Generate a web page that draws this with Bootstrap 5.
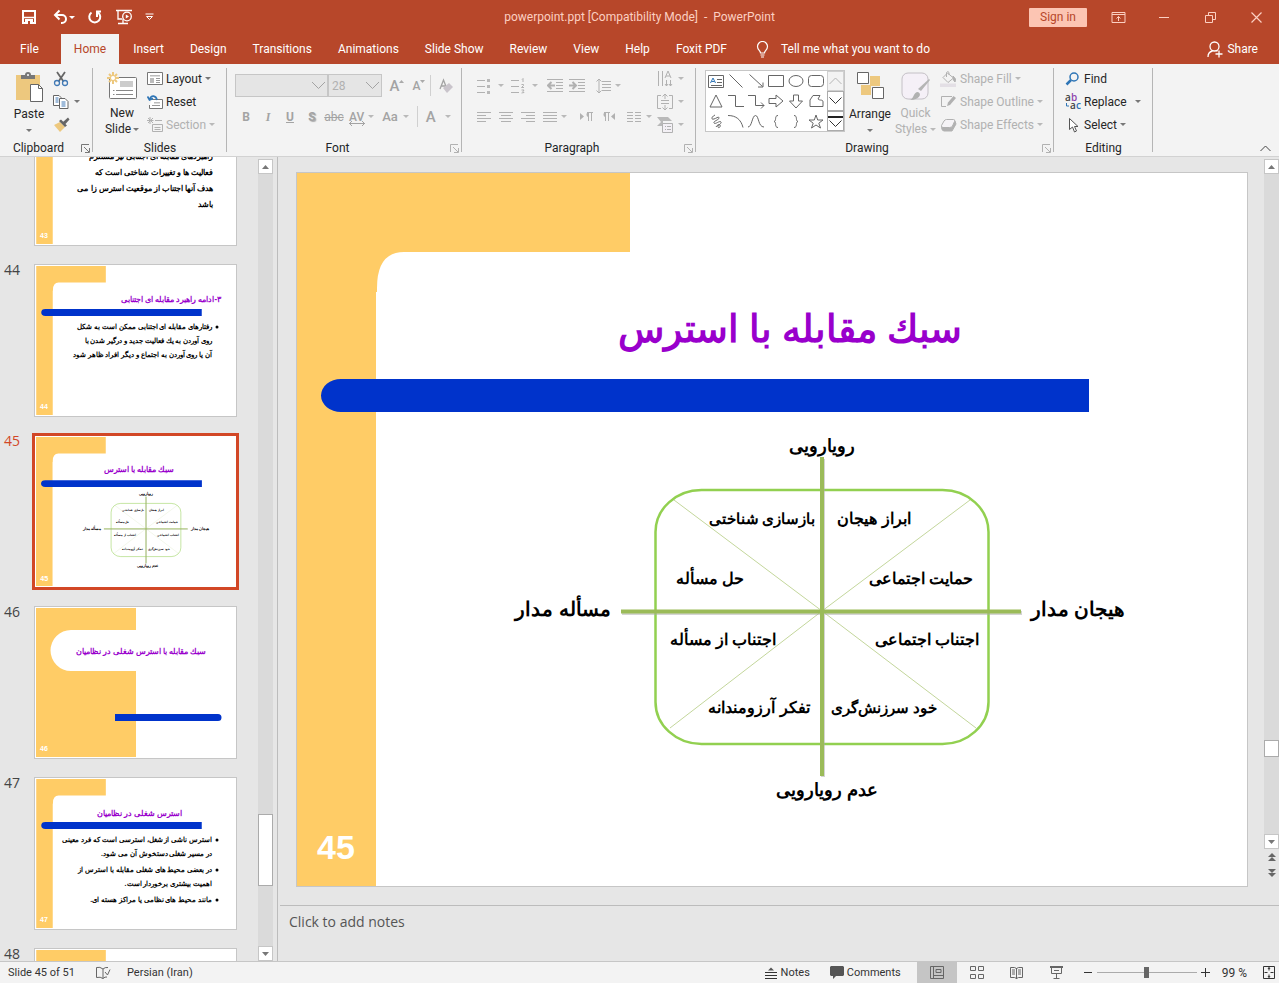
<!DOCTYPE html>
<html lang="en">
<head>
<meta charset="utf-8">
<meta name="viewport" content="width=device-width, initial-scale=1">
<title>powerpoint.ppt - PowerPoint</title>
<link href="https://cdn.jsdelivr.net/npm/bootstrap@5.3.0/dist/css/bootstrap.min.css" rel="stylesheet">
<style>
:root{--brand:#b7472a;--pane:#e6e6e6;--bar:#f3f3f3;--line:#c6c6c6;--ink:#262626;--off:#b1b1b1}
body{font:12px/16px Roboto,"Open Sans",sans-serif;color:var(--ink);background:var(--pane)}
button,input,select{font:inherit;color:inherit}
button{border:0;background:none;padding:0}
svg{display:block;flex:none;fill:none;stroke:currentColor}
svg text{stroke:none}
.brand{background:var(--brand);color:#fff}
.titlebar{height:34px;color:#fcd0c2}
.quick{color:#fff}
.quick button:first-child{margin-left:21px}
.winbtn{width:46px;height:32px;display:flex;align-items:center;justify-content:center}
.signin{width:58px;height:19px;background:#fcc5b3;color:var(--brand);border-radius:1px}
.tabs{height:30px}
.tabs a{color:#fff;text-decoration:none;padding:7px 13px}
.tabs a.active{background:var(--bar);color:var(--brand);margin:0 1px}
.ribbon{background:var(--bar);height:93px;border-bottom:1px solid #d2d2d2}
.grp{position:relative;display:flex;flex-direction:column;justify-content:space-between;flex:none}
.grp::after{content:"";position:absolute;right:0;top:4px;bottom:4px;border-right:1px solid #b5b5b5}
.grp-name{height:16px;text-align:center;padding-right:14px}
.launch{position:absolute;right:3px;bottom:3px;color:#777}
.rows{display:flex;flex-direction:column;padding-top:3px}
.rows>*{height:23px;display:flex;align-items:center}
.rows .btn-i,.tall{gap:3px}
.two{padding-top:6px}
.two>*{height:31px;display:flex;align-items:center}
.off{color:var(--off)}
.glyphs{color:#a3a3a3;font-weight:500}
.cell{width:22px;display:flex;justify-content:center;align-items:center}
.drop{display:flex;align-items:center;gap:5px}
.caret{width:0;height:0;flex:none;border:3px solid transparent;border-top-color:#777;border-bottom:0}
.off .caret,.off.caret{border-top-color:#b9b9b9}
.tall{display:flex;flex-direction:column;align-items:center}
.combo{position:relative;height:23px;flex:none;font-weight:400}
.combo select{appearance:none;width:100%;height:100%;background:#e5e5e5;border:1px solid #c6c6c6;border-radius:0;padding:0 3px;color:var(--off);opacity:1}
.combo svg{position:absolute;right:2px;top:7px}
.vsep{width:1px;height:21px;background:#d0d0d0}
.gallery{height:62px;border:1px solid #c6c6c6;background:#fff;margin:6px 0 0 9px}
.gal-grid{display:grid;grid-template-columns:repeat(6,20px);grid-auto-rows:20px;color:#666;padding-right:1px}
.gal-grid button{display:flex;align-items:center;justify-content:center}
.gal-nav{width:17px;display:flex;flex-direction:column;background:#fff}
.gal-nav button{flex:1;border:1px solid #ababab;display:flex;align-items:center;justify-content:center}
.gal-nav button:first-child{background:var(--bar);border-color:#d0d0d0;color:#b5b5b5}
.work{min-height:0}
.thumbs{width:258px;overflow:hidden}
.thumbs ol{list-style:none;margin:-64px 0 0;padding:0 21px 0 4px}
.thumbs li{display:flex;margin-bottom:18px}
.num{width:30px;flex:none;font:14px/12px "Open Sans",sans-serif;color:#444}
.thumb{display:block;flex:1;height:153px;border:1px solid var(--line);background:#fff;padding:1px;overflow:hidden}
.thumb svg{width:100%;height:auto}
.thumbs li.on .num{color:#d24726}
.thumbs li.on .thumb{border-color:#d24726;outline:2px solid #d24726}
.fa{font-family:"Noto Sans",serif;direction:rtl}
.scroll{width:15px;display:flex;flex-direction:column;padding-top:2px;flex:none}
.scroll button{height:15px;background:#fff;border:1px solid var(--line);display:flex;align-items:center;justify-content:center;flex:none}
.scroll .bare{background:none;border:0;height:16px}
.track{background:#dadada}
.grip{background:#fff;border:1px solid #ababab;flex:none}
.split{width:5px;border-right:1px solid #bcbcbc}
.stage{padding:15px 16px 18px 18px;min-width:0}
.slide{border:1px solid var(--line);background:#fff}
.slide svg{width:100%;height:auto}
.notes{border-top:1px solid #bcbcbc;margin-left:2px;flex:1}
.notes textarea{font:14px/18px "Open Sans",sans-serif;border:0;background:none;resize:none;width:100%;height:40px;padding:7px 9px;color:#555;display:block}
.notes textarea::placeholder{color:#555;opacity:1}
.status{height:22px;border-top:1px solid var(--line);background:var(--bar);color:#333;font-size:11px;line-height:20px}
.view{width:40px;height:21px;display:flex;align-items:center;justify-content:center;color:#666}
.view.on{background:#c5c5c5}
.zoom{appearance:none;width:100px;height:14px;background:linear-gradient(#ababab,#ababab) center/100% 1px no-repeat}
.zoom::-webkit-slider-thumb{appearance:none;width:5px;height:11px;background:#666}
</style>
</head>
<body class="vh-100 d-flex flex-column overflow-hidden">

<header class="brand flex-shrink-0">
  <div class="titlebar d-flex align-items-center">
    <div class="quick d-flex align-items-center col">
      <button aria-label="Save"><svg width="16" height="16" viewBox="0 0 16 16" stroke-width="2"><path d="M2 2h12v12H2z"/><path d="M2 8.500h12" stroke-width="1.500"/><path d="M4 10h8v4H4z" fill="currentColor" stroke="none"/><path d="M7 12h2v3H7z" fill="#b7472a" stroke="none"/></svg></button>
      <button class="ms-3" aria-label="Undo"><svg width="16" height="16" viewBox="0 0 16 16" stroke-width="2"><path d="M2.500 6H9a4 4 0 0 1 0 8H8M6.500 1.500 2 6l4.500 4.500"/></svg></button>
      <span class="caret" style="border-top-color:#fff"></span>
      <button class="ms-2 ps-1" aria-label="Repeat"><svg width="16" height="16" viewBox="0 0 16 16" stroke-width="2"><path d="M4.500 3.500a5.500 5.500 0 1 0 6.500 0M10 8V2.500h4"/></svg></button>
      <button class="ms-2 ps-1" aria-label="Start slide show"><svg width="18" height="16" viewBox="0 0 18 16" stroke-width="1.300"><path d="M1 1.500h16M3 1.500V10h4M3 14.500h10M8 10v4"/><circle cx="12" cy="7.500" r="4.300"/><path d="m10.800 5.500 3.200 2-3.200 2z" fill="currentColor" stroke="none"/></svg></button>
      <button class="ms-2 ps-1" aria-label="Customize toolbar"><svg width="9" height="8" viewBox="0 0 9 8"><path d="M.5 1h8M1.500 3.500l3 3 3-3z"/></svg></button>
    </div>
    <div style="white-space:pre">powerpoint.ppt [Compatibility Mode]  -  PowerPoint</div>
    <div class="d-flex align-items-center justify-content-end col">
      <button class="signin me-2">Sign in</button>
      <button class="winbtn" aria-label="Ribbon options"><svg width="15" height="11" viewBox="0 0 15 11"><path d="M1 .5h13v10H1zM1 2.500h13M7.500 9V4.500M5.500 6.500l2-2 2 2"/></svg></button>
      <button class="winbtn" aria-label="Minimize"><svg width="11" height="11" viewBox="0 0 11 11"><path d="M0 5.500h10"/></svg></button>
      <button class="winbtn" aria-label="Restore"><svg width="13" height="11" viewBox="0 0 13 11"><path d="M1.500 3.500h7v7h-7zM4.500 3V.5h7v7H9"/></svg></button>
      <button class="winbtn" aria-label="Close"><svg width="11" height="11" viewBox="0 0 11 11"><path d="m.5.5 10 10M10.500.5l-10 10" stroke-width="1.200"/></svg></button>
    </div>
  </div>
  <nav class="tabs d-flex">
    <a href="#" class="ms-1 ps-3 me-2">File</a><a href="#" class="active">Home</a><a href="#">Insert</a><a href="#">Design</a><a href="#">Transitions</a><a href="#">Animations</a><a href="#">Slide Show</a><a href="#">Review</a><a href="#">View</a><a href="#">Help</a><a href="#">Foxit PDF</a>
    <a href="#" class="d-flex gap-2 ps-3"><svg class="me-1" width="13" height="17" viewBox="0 0 13 17" stroke-width="1.200"><path d="M4.500 12c0-2.500-3-3-3-6.500a5 5 0 0 1 10 0c0 3.500-3 4-3 6.500zM4.500 14h4M5 16h3"/></svg>Tell me what you want to do</a>
    <a href="#" class="ms-auto d-flex gap-1 me-2"><svg width="16" height="17" viewBox="0 0 16 17" stroke-width="1.300"><circle cx="7.500" cy="5.500" r="4.500"/><path d="M1 16c0-3 2-5.500 4.500-6M9.500 9.500l1 .8M8.500 13h7M12 9.500v7"/></svg>Share</a>
  </nav>
</header>

<section class="ribbon d-flex flex-shrink-0" aria-label="Home">
  <div class="grp" style="width:93px">
    <div class="d-flex">
      <button class="tall pt-1" style="width:58px"><svg class="mt-1" width="30" height="31" viewBox="0 0 30 31"><path d="M2 3h24v25H2z" fill="#edc87e" stroke="none"/><path d="M7 6V3h4a3 3 0 0 1 6 0h4v4H7z" fill="#777" stroke="none"/><circle cx="14" cy="3" r="1" fill="#fff" stroke="none"/><path d="M16.500 12.500h8l4 4v13h-12z" fill="#fff" stroke="#666"/><path d="M24.500 12.500v4h4" stroke="#666"/></svg><span>Paste</span><span class="caret mt-1"></span></button>
      <div class="rows" style="margin-left:-5px">
        <button aria-label="Cut"><svg width="16" height="16" viewBox="0 0 16 16"><path d="m4 1 6.500 9.500M12 1 5.500 10.500" stroke="#666" stroke-width="1.800"/><circle cx="4" cy="12" r="2.500" stroke="#4179b5" stroke-width="1.300"/><circle cx="12" cy="12" r="2.500" stroke="#4179b5" stroke-width="1.300"/></svg></button>
        <button class="drop" aria-label="Copy"><svg width="16" height="16" viewBox="0 0 16 16"><path d="M.5 1.500H6l2 2v8H.5z" fill="#fff" stroke="#666"/><path d="M6.500 4.500H12l3 3v7H6.500z" fill="#fff" stroke="#666"/><path d="M2.500 4h3M2.500 6h3M2.500 8h3M8.500 8h4M8.500 10h4M8.500 12h4" stroke="#4179b5"/></svg><span class="caret"></span></button>
        <button aria-label="Format Painter"><svg width="17" height="16" viewBox="0 0 17 16"><path d="m1 8 6-3 5 5-5 5z" fill="#edc87e" stroke="none"/><path d="m6 4 2-1.500 6 6-2 1.500zM10 5l5-4.500 1.500 2-4.500 5z" fill="#666" stroke="none"/></svg></button>
      </div>
    </div>
    <div class="grp-name pe-3">Clipboard</div>
    <button class="launch" aria-label="Clipboard options"><svg width="9" height="9" viewBox="0 0 9 9"><path d="M.5 8V.5H8M3 3l5 5M8.500 4v4.500H4"/></svg></button>
  </div>

  <div class="grp" style="width:134px">
    <div class="d-flex ps-2">
      <button class="tall pt-1" style="width:42px;gap:0"><svg class="mb-1 mt-1" width="32" height="29" viewBox="0 0 32 29"><rect x="3.500" y="5.500" width="27" height="21" rx="1" fill="#fff" stroke="#777"/><path d="M14 9h13v6H14z" fill="#ccc" stroke="none"/><path d="M7 18.500h1.500M10 18.500h17M7 22.500h1.500M10 22.500h17" stroke="#888"/><path d="M7 0v12M1 6h12M3 2l8 8M11 2l-8 8" stroke="#edc87e" stroke-width="2"/><circle cx="7" cy="6" r="2" fill="#fff" stroke="none"/></svg><span>New</span><span class="drop" style="gap:2px">Slide <span class="caret"></span></span></button>
      <div class="rows ps-1">
        <button class="btn-i"><svg width="16" height="15" viewBox="0 0 16 15"><path d="M.5 1.500h15v12H.5z" fill="#fff" stroke="#777"/><path d="M3 4h10v1.500H3zM3 7h4v5H3z" fill="#bbb" stroke="none"/><path d="M9 7.500h4M9 9.500h4M9 11.500h4" stroke="#999"/></svg>Layout<span class="caret"></span></button>
        <button class="btn-i"><svg width="16" height="16" viewBox="0 0 16 16"><path d="M5 5.500h10.500v9h-13V11" fill="#fff" stroke="#777"/><path d="M7 8h6v1.500H7z" fill="#bbb" stroke="none"/><path d="M5 11.500h8" stroke="#999"/><path d="M10 6C9 1 4 1 3 5M.5 2.500 2.500 6 6 4.500" stroke="#2e75b6" stroke-width="1.700"/></svg>Reset</button>
        <button class="btn-i off"><svg width="16" height="16" viewBox="0 0 16 16"><path d="M3 0v7M0 3.500h6.500M1 1l5 5M6 1 1 6M8 3.500h7M5.500 7.500h10v7h-10zM7.500 10.500h6M7.500 12.500h6"/></svg>Section<span class="caret"></span></button>
      </div>
    </div>
    <div class="grp-name pe-0">Slides</div>
  </div>

  <div class="grp off" style="width:235px">
    <div class="two ps-2 glyphs">
      <div>
        <label class="combo" style="width:93px"><select disabled aria-label="Font name"><option></option></select><svg width="15" height="9" viewBox="0 0 15 9"><path d="m1 1 6.500 6.500L14 1"/></svg></label>
        <label class="combo" style="width:54px"><select disabled aria-label="Font size"><option>28</option></select><svg width="15" height="9" viewBox="0 0 15 9"><path d="m1 1 6.500 6.500L14 1"/></svg></label>
        <button class="cell ms-1" style="font-size:15px" aria-label="Increase font size">A<svg class="mb-2" width="5" height="4"><path d="m0 3 2.500-3L5 3z" fill="#aaa" stroke="none"/></svg></button>
        <button class="cell" aria-label="Decrease font size">A<svg class="mb-2" width="5" height="4"><path d="m0 0 2.500 3L5 0z" fill="#aaa" stroke="none"/></svg></button>
        <span class="vsep"></span>
        <button class="cell ms-1" aria-label="Clear formatting"><svg width="16" height="16" viewBox="0 0 16 16"><path d="M2 11 5.500 2 9 11M3 8h5" stroke-width="1.300"/><path d="m5 10 6-5 4 4-6 6z" fill="#c9c4cb" stroke="none"/></svg></button>
      </div>
      <div>
        <button class="cell fw-bold">B</button><button class="cell fst-italic fw-bold" style="font-family:'Liberation Serif',serif">I</button><button class="cell fw-bold text-decoration-underline">U</button><button class="cell fw-bold" style="text-shadow:1px 1px 1px #aaa">S</button><button class="cell fw-normal text-decoration-line-through">abc</button>
        <button class="drop ms-1" style="gap:4px"><span class="position-relative">AV<svg class="position-absolute start-0" style="top:12px" width="16" height="5" viewBox="0 0 16 5"><path d="M0 2.500h16M3 0 .5 2.500 3 5M13 0l2.500 2.500L13 5"/></svg></span><span class="caret"></span></button>
        <button class="drop ms-2" style="font-size:13px">Aa<span class="caret"></span></button>
        <span class="vsep ms-2"></span>
        <button class="drop ms-2" style="gap:9px;font-size:15px">A<span class="caret"></span></button>
      </div>
    </div>
    <div class="grp-name text-body">Font</div>
    <button class="launch off" aria-label="Font options"><svg width="9" height="9" viewBox="0 0 9 9"><path d="M.5 8V.5H8M3 3l5 5M8.500 4v4.500H4"/></svg></button>
  </div>

  <div class="grp off" style="width:234px">
    <div class="d-flex">
      <div class="two" style="width:195px">
        <div style="padding-left:14px">
          <button class="drop" style="width:34px;gap:6px" aria-label="Bullets"><svg width="16" height="16" viewBox="0 0 16 16"><path d="M1 2.500h8M1 8.500h8M1 14.500h8"/><path d="M11 1h3v3h-3zM11 7h3v3h-3zM11 13h3v3h-3z" fill="#b9b9b9" stroke="none"/></svg><span class="caret"></span></button>
          <button class="drop" style="width:34px;gap:6px" aria-label="Numbering"><svg width="16" height="16" viewBox="0 0 16 16"><path d="M1 2.500h8M1 8.500h8M1 14.500h8M12 1.500l1-1V4M11.500 6.500h2v1l-2 2h2.500M11.500 12h2.500l-1 1.500 1 1-2.500.5"/></svg><span class="caret"></span></button>
          <button class="cell" aria-label="Decrease indent"><svg width="17" height="14" viewBox="0 0 17 14"><path d="M0 .5h16M9 3.500h7M9 6.500h7M9 9.500h7M0 12.500h16"/><path d="M1 6.500h7M4.500 3 1 6.500 4.500 10" stroke-width="2"/></svg></button>
          <button class="cell" aria-label="Increase indent"><svg width="17" height="14" viewBox="0 0 17 14"><path d="M0 .5h16M9 3.500h7M9 6.500h7M9 9.500h7M0 12.500h16"/><path d="M0 6.500h7M3.500 3 7 6.500 3.500 10" stroke-width="2"/></svg></button>
          <button class="drop ms-2" style="gap:4px" aria-label="Line spacing"><svg width="15" height="16" viewBox="0 0 15 16"><path d="M6 3.500h9M6 6.500h9M6 9.500h9M6 12.500h9M3 1v14M.5 3.500 3 1l2.500 2.500M.5 12.500 3 15l2.500-2.500"/></svg><span class="caret"></span></button>
        </div>
        <div style="padding-left:11px">
          <button class="cell" aria-label="Align left"><svg width="14" height="10"><path d="M0 .5h14M0 3.500h9M0 6.500h14M0 9.500h9"/></svg></button>
          <button class="cell" aria-label="Center"><svg width="14" height="10"><path d="M0 .5h14M2 3.500h10M0 6.500h14M2 9.500h10"/></svg></button>
          <button class="cell" aria-label="Align right"><svg width="14" height="10"><path d="M0 .5h14M5 3.500h9M0 6.500h14M5 9.500h9"/></svg></button>
          <button class="drop ms-1 pe-2" style="gap:4px" aria-label="Justify"><svg width="14" height="10"><path d="M0 .5h14M0 3.500h14M0 6.500h14M0 9.500h14"/></svg><span class="caret"></span></button>
          <button class="cell" aria-label="Left to right"><svg width="13" height="9" viewBox="0 0 13 9"><path d="m0 1 4 3.500L0 8z" fill="#b1b1b1" stroke="none"/><path d="M7 .5h6M8.500 0v9M11.500 0v9"/><path d="M9 0a2.500 2.500 0 0 0 0 5z" fill="#b1b1b1" stroke="none"/></svg></button>
          <button class="cell" aria-label="Right to left"><svg width="13" height="9" viewBox="0 0 13 9"><path d="M13 1 9 4.500 13 8z" fill="#b1b1b1" stroke="none"/><path d="M2 .5h6M3.500 0v9M6.500 0v9"/><path d="M4 0a2.500 2.500 0 0 0 0 5z" fill="#b1b1b1" stroke="none"/></svg></button>
          <button class="drop ms-2" aria-label="Columns"><svg width="14" height="10"><path d="M0 .5h6M0 3.500h6M0 6.500h6M0 9.500h6M8 .5h6M8 3.500h6M8 6.500h6M8 9.500h6"/></svg><span class="caret"></span></button>
        </div>
      </div>
      <div class="rows">
        <button class="drop" aria-label="Text direction"><svg width="16" height="16" viewBox="0 0 16 16"><path d="M1.500 0v15M5.500 0v15M9.500 9v6M13.500 9v6M8 7l3-7 3 7M9 5h4M12 13l1.500 2 1.500-2M8 13l1.500 2 1.500-2"/></svg><span class="caret"></span></button>
        <button class="drop" aria-label="Align text"><svg width="16" height="16" viewBox="0 0 16 16"><path d="M4 1.500H.5v13H4M12 1.500h3.500v13H12M8 0v5M5.500 2.500 8 0l2.500 2.500M8 16v-5M5.500 13.500 8 16l2.500-2.500M4 6.500h8M4 9.500h8"/></svg><span class="caret"></span></button>
        <button class="drop" aria-label="Convert to SmartArt"><svg width="16" height="16" viewBox="0 0 16 16"><path d="M0 0h11l4 4H6v5H0l4-4z" fill="#b9b9b9" stroke="none"/><path d="M5.500 6.500h10v9h-10z" fill="#f3f0f5"/><path d="M8 9.500h1M10 9.500h4M8 12.500h1M10 12.500h4"/></svg><span class="caret"></span></button>
      </div>
    </div>
    <div class="grp-name text-body">Paragraph</div>
    <button class="launch off" aria-label="Paragraph options"><svg width="9" height="9" viewBox="0 0 9 9"><path d="M.5 8V.5H8M3 3l5 5M8.500 4v4.500H4"/></svg></button>
  </div>

  <div class="grp" style="width:358px">
    <div class="d-flex">
      <div class="gallery d-flex">
        <div class="gal-grid">
          <button aria-label="Text box"><svg width="16" height="13" viewBox="0 0 16 13"><path d="M.5.5h15v12H.5zM9 4.500h5M9 7.500h5M3 10.500h11"/><path d="M2.500 8 5 3l2.500 5M3.500 6.500h3" stroke="#2e75b6"/></svg></button>
          <button aria-label="Line"><svg width="14" height="14"><path d="m.5.5 13 13"/></svg></button>
          <button aria-label="Arrow line"><svg width="15" height="14"><path d="m.5.5 13 12M14 8.500v4.500H9"/></svg></button>
          <button aria-label="Rectangle"><svg width="16" height="12"><path d="M.5.5h15v11H.5z"/></svg></button>
          <button aria-label="Oval"><svg width="16" height="12"><ellipse cx="8" cy="6" rx="7" ry="5.500"/></svg></button>
          <button aria-label="Rounded rectangle"><svg width="16" height="12"><rect x=".5" y=".5" width="15" height="11" rx="3"/></svg></button>
          <button aria-label="Triangle"><svg width="14" height="14"><path d="m7 1 6 12H1z"/></svg></button>
          <button aria-label="Elbow"><svg width="16" height="14"><path d="M0 1.500h7.500v11H16"/></svg></button>
          <button aria-label="Elbow arrow"><svg width="17" height="15"><path d="M0 1.500h7.500v10H16M13 8.500l3 3-3 3"/></svg></button>
          <button aria-label="Right arrow"><svg width="16" height="14"><path d="M1 4.500h7V1l7 6-7 6V9.500H1z"/></svg></button>
          <button aria-label="Down arrow"><svg width="16" height="15"><path d="M5.500 1v6H1.500L8 14l6.500-7h-4V1z"/></svg></button>
          <button aria-label="Freeform"><svg width="15" height="14"><path d="M4 1.500h7L9 5c2 2 5 0 5 3v4.500H1V6z"/></svg></button>
          <button aria-label="Scribble"><svg width="13" height="15"><path d="M5 1C1 3 1 6 4 5s5-3 5-1-6 3-5 5 6-3 7-1-4 3-3 5 3-1 2-2-3 0-4 2"/></svg></button>
          <button aria-label="Arc"><svg width="16" height="14"><path d="M0 1.500c8 0 13 4 15 12"/></svg></button>
          <button aria-label="Curve"><svg width="17" height="14"><path d="M0 13C4 13 4 1.500 7.500 1.500S10 13 16 13"/></svg></button>
          <button aria-label="Left brace"><svg width="6" height="13"><path d="M5 .5C1 .5 4 6 1 6.500 4 7 1 12.500 5 12.500"/></svg></button>
          <button aria-label="Right brace"><svg width="6" height="13"><path d="M1 .5c4 0 1 5.500 4 6-3 .5 0 6-4 6"/></svg></button>
          <button aria-label="Star"><svg width="16" height="15"><path d="m8 1 1.700 5H15l-4.200 3.200L12.500 14 8 11l-4.500 3 1.700-4.800L1 6h5.300z"/></svg></button>
        </div>
        <div class="gal-nav">
          <button aria-label="Scroll up"><svg width="13" height="8"><path d="m.5 7 6-6 6 6"/></svg></button>
          <button aria-label="Scroll down"><svg width="13" height="8"><path d="m.5.500 6 6 6-6" stroke="#333"/></svg></button>
          <button aria-label="More shapes"><svg width="15" height="13"><path d="M0 2h15" stroke="#222" stroke-width="2"/><path d="m1.500 5.500 6 6 6-6" stroke="#333"/></svg></button>
        </div>
      </div>
      <button class="tall pt-1" style="width:50px"><svg class="mt-1" width="28" height="31" viewBox="0 0 28 31"><path d="M14 4h10v10H14zM5 13h10v10H5z" fill="#edc87e" stroke="none"/><path d="M1.500.500h11v11h-11zM16.500 15.500h11v11h-11z" fill="#fff" stroke="#666"/></svg><span>Arrange</span><span class="caret mt-1"></span></button>
      <button class="tall pt-1 off" style="width:41px;gap:0"><svg class="mb-1 mt-1" width="30" height="29" viewBox="0 0 30 29"><rect x="1" y="1" width="26" height="26" rx="6" fill="#f5f0f7" stroke="#c4c0c6"/><path d="m29 8-9 11-3-2L28 7z" fill="#b5b5b5" stroke="none"/><path d="M8 28c5 0 4-8 9-8 5 2 0 9-9 8z" fill="#b1b1b1" stroke="none"/></svg><span>Quick</span><span class="drop" style="gap:3px">Styles <span class="caret"></span></span></button>
      <div class="rows off ps-1">
        <button class="btn-i"><svg width="17" height="16" viewBox="0 0 17 16"><path d="m7.500 2 6 5-5.500 4.500-5-5zM6.500 6V1.500q1.500-2 2.500 0V4"/><path d="M13 5q4 3 2 6-2-1-2-6z" fill="#b1b1b1"/><path d="M0 12.500h16V16H0z" fill="#e3dfe5" stroke="none"/></svg>Shape Fill<span class="caret"></span></button>
        <button class="btn-i"><svg width="17" height="16" viewBox="0 0 17 16"><path d="M12 2.500H1.500v10H6"/><path d="m7 12 1-3.500L13.500 2 16 4l-6 7z" fill="#b1b1b1" stroke="none"/></svg>Shape Outline<span class="caret"></span></button>
        <button class="btn-i"><svg width="17" height="16" viewBox="0 0 17 16"><path d="m15 4 1 3-4 7H4q-2 0-2.500-3.500H11z" fill="#b1b1b1"/><path d="M6.500 2.500h7q2 0 1 2l-2 4.500q-1 1.500-3 1.500H3q-2 0-1.500-2L4 4q1-1.500 2.500-1.500z" fill="#f5f3f6"/></svg>Shape Effects<span class="caret"></span></button>
      </div>
    </div>
    <div class="grp-name pe-3">Drawing</div>
    <button class="launch off" aria-label="Drawing options"><svg width="9" height="9" viewBox="0 0 9 9"><path d="M.5 8V.5H8M3 3l5 5M8.500 4v4.500H4"/></svg></button>
  </div>

  <div class="grp" style="width:99px">
    <div class="rows" style="padding-left:11px">
      <button class="btn-i"><svg width="16" height="14" viewBox="0 0 16 14"><circle cx="9" cy="5" r="4" stroke="#2e75b6" stroke-width="1.500"/><path d="m6 8-4.500 4.500" stroke="#2e75b6" stroke-width="2.500"/></svg>Find</button>
      <div><button class="btn-i d-flex align-items-center"><svg width="16" height="18" viewBox="0 0 16 18" font-family="Open Sans" font-size="10" font-weight="600"><text x="0" y="8" fill="#444">a</text><text x="6" y="8" fill="#8e44ad">b</text><text x="5" y="16" fill="#444">a</text><text x="11" y="16" fill="#2e75b6">c</text><path d="M1.500 10v3H4" stroke="#2e75b6"/></svg>Replace</button><button class="caret ms-2" aria-label="Replace options"></button></div>
      <button class="btn-i"><svg width="16" height="16" viewBox="0 0 16 16"><path d="M4.500 1.500v11l3-2.500 2 5 2-1-2-4.500h3.500z" fill="#fff" stroke="#555"/></svg>Select<span class="caret"></span></button>
    </div>
    <div class="grp-name pe-0">Editing</div>
  </div>
  <button class="ms-auto align-self-end me-2 mb-1" aria-label="Collapse the ribbon"><svg width="11" height="7"><path d="m.5 6 5-5 5 5" stroke="#444"/></svg></button>
</section>

<main class="work d-flex flex-fill">
  <aside class="thumbs flex-shrink-0">
    <ol>
      <li><span class="num"></span><a href="#" class="thumb" aria-label="Slide 43"><svg viewBox="0 0 199 149"><use href="#look" width="199" height="149"/><g class="fa" font-size="8" font-weight="bold" fill="#000"><text x="177" y="64">راهبردهای مقابله ای اجتنابی نیز مستلزم</text><text x="177" y="80">فعالیت ها و تغییرات شناختی است كه</text><text x="177" y="96">هدف آنها اجتناب از موقعیت استرس زا می</text><text x="177" y="112">باشد</text></g><text x="4" y="143" font-family="Liberation Sans" font-weight="bold" font-size="7" fill="#fff">43</text></svg></a></li>
      <li><span class="num">44</span><a href="#" class="thumb"><svg viewBox="0 0 199 149"><use href="#look" width="199" height="149"/><text class="fa" x="185" y="36" font-size="8" fill="#90c" font-weight="bold">۳-ادامه راهبرد مقابله ای اجتنابی</text><g class="fa" font-size="7" font-weight="bold" fill="#000"><text x="176" y="63">رفتارهای مقابله ای اجتنابی ممكن است به شكل</text><text x="176" y="77">روی آوردن به یك فعالیت جدید و درگیر شدن با</text><text x="176" y="91">آن یا روی آوردن به اجتماع و دیگر افراد ظاهر شود</text></g><circle cx="181" cy="61" r="1.500" fill="#000" stroke="none"/><text x="4" y="143" font-family="Liberation Sans" font-weight="bold" font-size="7" fill="#fff">44</text></svg></a></li>
      <li class="on"><span class="num">45</span><a href="#" class="thumb" id="current" aria-label="Slide 45"></a></li>
      <li><span class="num">46</span><a href="#" class="thumb"><svg viewBox="0 0 199 149"><path d="M0 0h100v22H35a20 20 0 0 0 0 41h65v86H0z" fill="#fc6" stroke="none"/><path d="M79 106h103a3.500 3.500 0 0 1 0 7H79z" fill="#0033cb" stroke="none"/><text class="fa" x="105" y="46" text-anchor="middle" font-size="8" font-weight="bold" fill="#90c">سبك مقابله با استرس شغلی در نظامیان</text><text x="4" y="143" font-family="Liberation Sans" font-weight="bold" font-size="7" fill="#fff">46</text></svg></a></li>
      <li><span class="num">47</span><a href="#" class="thumb"><svg viewBox="0 0 199 149"><use href="#look" width="199" height="149"/><text class="fa" x="146" y="37" font-size="8" font-weight="bold" fill="#90c">استرس شغلی در نظامیان</text><g class="fa" font-size="7" font-weight="bold" fill="#000"><text x="176" y="63">استرس ناشی از شغل، استرسی است كه فرد معینی</text><text x="176" y="77">در مسیر شغلی دستخوش آن می شود.</text><text x="176" y="93">در بعضی محیط های شغلی مقابله با استرس از</text><text x="176" y="107">اهمیت بیشتری برخوردار است.</text><text x="176" y="123">مانند محیط های نظامی یا مراكز هسته ای.</text></g><g fill="#000" stroke="none"><circle cx="181" cy="61" r="1.500"/><circle cx="181" cy="91" r="1.500"/><circle cx="181" cy="121" r="1.500"/></g><text x="4" y="143" font-family="Liberation Sans" font-weight="bold" font-size="7" fill="#fff">47</text></svg></a></li>
      <li><span class="num">48</span><a href="#" class="thumb" aria-label="Slide 48"><svg viewBox="0 0 199 149"><use href="#look" width="199" height="149"/></svg></a></li>
    </ol>
  </aside>
  <div class="scroll">
    <button aria-label="Scroll up"><svg width="7" height="4"><path d="M0 4 3.500 0 7 4z" fill="#777" stroke="none"/></svg></button>
    <div class="track" style="flex:641"></div><div class="grip" style="height:72px"></div><div class="track" style="flex:60"></div>
    <button aria-label="Scroll down"><svg width="7" height="4"><path d="m0 0 3.500 4L7 0z" fill="#777" stroke="none"/></svg></button>
  </div>
  <div class="split"></div>
  <div class="d-flex flex-column flex-fill" style="min-width:0">
    <div class="d-flex">
      <div class="stage flex-fill">
        <div class="slide">
          <svg id="slide" viewBox="0 0 950 713">
            <defs><symbol id="look" viewBox="0 0 950 713"><path d="M0 0h333v79H107q-27 0-27 36v4h-1v594H0z" fill="#fc6" stroke="none"/><path d="M792 206v33H44a20 16.500 0 0 1 0-33z" fill="#0033cb" stroke="none"/></symbol></defs>
            <use href="#look" width="950" height="713"/>
            <text class="fa" x="493" y="169" text-anchor="middle" font-size="38" font-weight="bold" fill="#90c">سبك مقابله با استرس</text>
            <g stroke="#c3d69b"><path d="M377 327 525 438 373 555M673 327 525 438 679 555"/></g>
            <rect x="358.500" y="317" width="333" height="254" rx="46" ry="42" stroke="#92d050" stroke-width="2.500"/>
            <path d="M526 286v318M325 440h400" stroke="#aaa" stroke-width="4" opacity=".5"/>
            <path d="M525 284v319M324 438.500h400" stroke="#9bbb59" stroke-width="4"/>
            <g class="fa" font-weight="bold" fill="#000" text-anchor="middle">
              <g font-size="18"><text x="525" y="279">رویارویی</text><text x="530" y="623">عدم رویارویی</text></g>
              <g font-size="20"><text x="781" y="443">هیجان مدار</text><text x="266" y="443">مسأله مدار</text></g>
              <g font-size="16"><text x="465" y="351" font-size="15">بازسازی شناختی</text><text x="577" y="351">ابراز هیجان</text><text x="413" y="411">حل مسأله</text><text x="624" y="411">حمایت اجتماعی</text><text x="426" y="472">اجتناب از مسأله</text><text x="630" y="472">اجتناب اجتماعی</text><text x="462" y="540">تفكر آرزومندانه</text><text x="587" y="540" font-size="15">خود سرزنش‌گری</text></g>
            </g>
            <text x="20" y="686" font-family="Liberation Sans" font-weight="bold" font-size="34" fill="#fff">45</text>
          </svg>
        </div>
      </div>
      <div class="scroll">
        <button aria-label="Scroll up"><svg width="7" height="4"><path d="M0 4 3.500 0 7 4z" fill="#777" stroke="none"/></svg></button>
        <div class="track" style="flex:566"></div><div class="grip" style="height:17px"></div><div class="track" style="flex:77"></div>
        <button aria-label="Scroll down"><svg width="7" height="4"><path d="m0 0 3.500 4L7 0z" fill="#777" stroke="none"/></svg></button>
        <button class="bare" aria-label="Previous slide"><svg width="8" height="8"><path d="m0 4 4-4 4 4zM0 8l4-4 4 4z" fill="#666" stroke="none"/></svg></button>
        <button class="bare mb-4" aria-label="Next slide"><svg width="8" height="8"><path d="m0 0 4 4 4-4zM0 4l4 4 4-4z" fill="#666" stroke="none"/></svg></button>
      </div>
    </div>
    <div class="notes"><textarea placeholder="Click to add notes" aria-label="Notes"></textarea></div>
  </div>
</main>

<footer class="status d-flex align-items-center flex-shrink-0">
  <span class="ms-2" style="width:88px">Slide 45 of 51</span>
  <button aria-label="Spelling"><svg width="15" height="14" viewBox="0 0 15 14"><path d="M7 3v9.500M7 3Q4 .5.500 1.500v10q4-1 6.500 1 2-2 4-1.500M7 3q2-2 5-1.500M9 6l2.500 3L14 3.500" stroke="#666"/></svg></button>
  <button class="ms-3">Persian (Iran)</button>
  <button class="ms-auto d-flex align-items-center gap-1"><svg width="12" height="12" viewBox="0 0 12 12"><path d="M0 5.500h12M0 8.500h12M0 11.500h12"/><path d="m3 3.500 3-3 3 3z" fill="#555" stroke="none"/></svg>Notes</button>
  <button class="d-flex align-items-center ms-3 ps-1 me-3" style="gap:3px"><svg width="14" height="13" viewBox="0 0 14 13"><path d="M1 0h12l1 1v8l-1 1H6l-3 3v-3H1L0 9V1z" fill="#555" stroke="none"/></svg>Comments</button>
  <button class="view on" aria-label="Normal"><svg width="14" height="14"><path d="M.5.500h13v12H.5zM3.500.5v12M3.500 9.500h10M6 3.500h5v3H6z"/></svg></button>
  <button class="view" aria-label="Slide sorter"><svg width="14" height="13"><path d="M.5.500h5v4h-5zM8.500.5h5v4h-5zM.5 8.500h5v4h-5zM8.500 8.500h5v4h-5z"/></svg></button>
  <button class="view" aria-label="Reading view"><svg width="14" height="13"><path d="M6.500 2v11M.5 1.500h4l2 1 2-1h4v10h-4l-2 1-2-1h-4zM2 4h3M2 6h3M2 8h3M8 4h3M8 6h3M8 8h3"/></svg></button>
  <button class="view" aria-label="Slide show"><svg width="13" height="13"><path d="M0 1h13" stroke-width="2"/><path d="M1.500 2v5.500h10V2M6.500 8v4M3.500 12.500h6M4 4.500h5"/></svg></button>
  <button class="ms-1" aria-label="Zoom out"><svg width="16" height="9"><path d="M3 4.500h8"/></svg></button>
  <input class="zoom" type="range" min="10" max="190" value="99" aria-label="Zoom">
  <button class="ms-1" aria-label="Zoom in"><svg width="9" height="9"><path d="M0 4.500h9M4.500 0v9"/></svg></button>
  <button class="ms-2 ps-1" style="font-size:12px">99 %</button>
  <button class="ms-3 me-1" aria-label="Fit to window"><svg width="12" height="14" viewBox="0 0 12 14" stroke="#666"><path d="M.5.500h11v12H.5z"/><path d="M6 1.500v3M6 8.500v3M1.500 6.500h3M7.500 6.500h3M5 3l1-1.500L7 3M5 10l1 1.500L7 10"/></svg></button>
</footer>

<script src="https://cdn.jsdelivr.net/npm/bootstrap@5.3.0/dist/js/bootstrap.bundle.min.js"></script>
<script>
// The preview of the open slide shows the same drawing as the stage.
const preview = document.getElementById('slide').cloneNode(true);
preview.removeAttribute('id');
preview.querySelector('defs').remove();
document.getElementById('current').append(preview);
</script>
</body>
</html>
